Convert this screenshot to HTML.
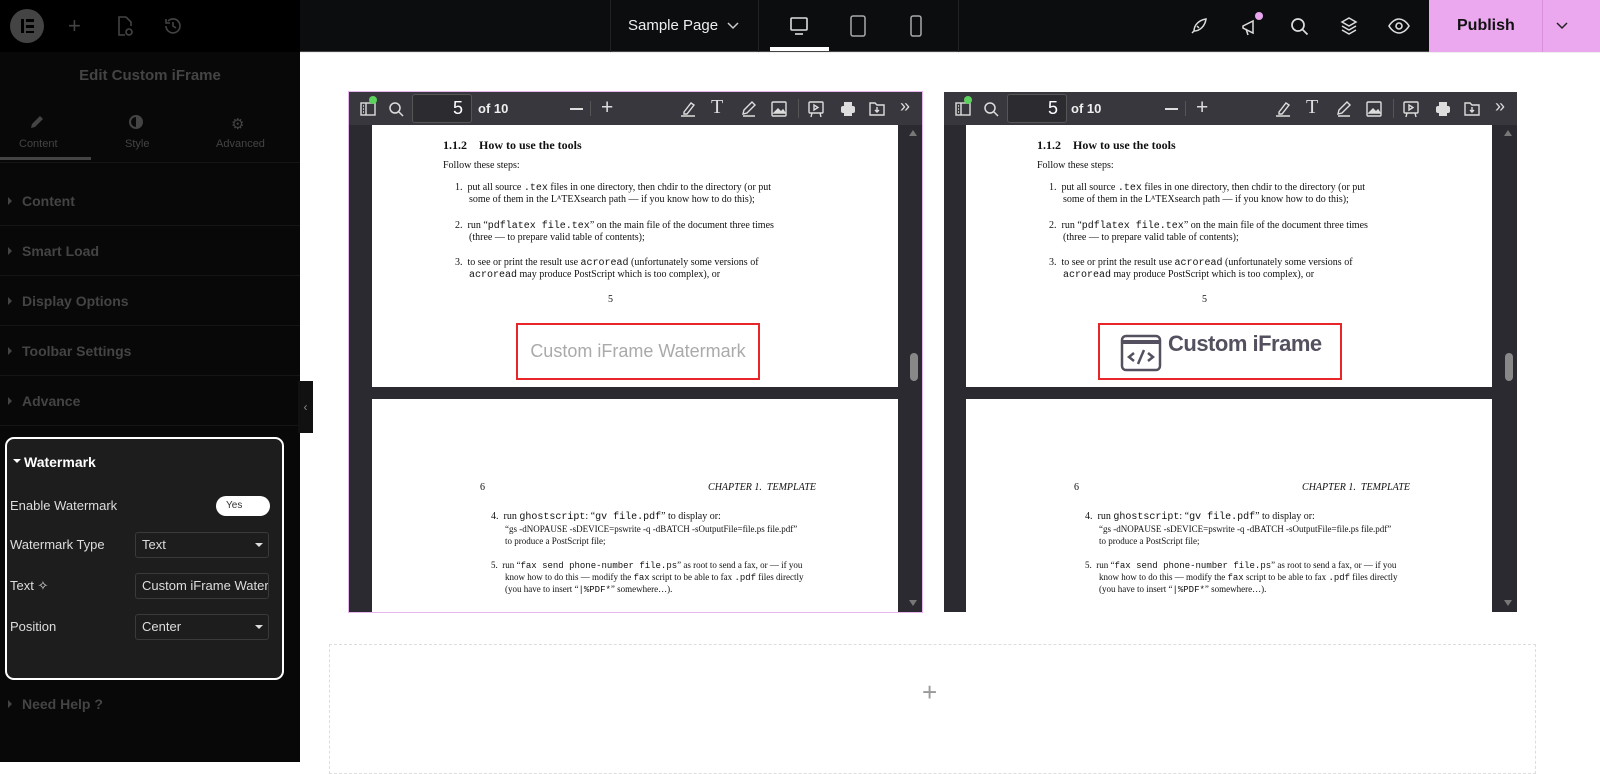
<!DOCTYPE html>
<html><head><meta charset="utf-8"><style>
*{margin:0;padding:0;box-sizing:border-box}
body{width:1600px;height:762px;overflow:hidden;background:#fff;font-family:"Liberation Sans",sans-serif;position:relative}
.a{position:absolute}
#top{left:0;top:0;width:1600px;height:52px;background:#0c0d0e;border-bottom:1px solid #444}
#side{left:0;top:52px;width:300px;height:710px;background:#080808}
.sec{position:absolute;left:0;width:300px;height:50px;border-bottom:1px solid #151515;color:#444;font-weight:bold;font-size:14px;padding:0 0 0 22px;line-height:50px}
.sec:before{content:"";position:absolute;left:8px;top:21px;border-left:4px solid #444;border-top:4px solid transparent;border-bottom:4px solid transparent}
.viewer{position:absolute;top:92px;width:573px;height:520px;background:#2b2a30;overflow:hidden}
.tb{position:absolute;left:0;top:0;width:100%;height:33px;background:#38373d;color:#ddd}
.pg{position:absolute;background:#fff;font-family:"Liberation Serif",serif;font-size:10px;color:#111;line-height:12px}
.pg .t{position:absolute;white-space:nowrap}
.mono{font-family:"Liberation Mono",monospace}
.ico{position:absolute;top:8px}
.fld{position:absolute;left:135px;width:134px;height:26px;border:1px solid #3a3a3a;border-radius:3px;color:#ddd;font-size:13px;line-height:24px;padding-left:6px}
.lbl{position:absolute;left:10px;color:#ddd;font-size:13px}
</style></head><body>

<div id="top" class="a">
 <div class="a" style="left:0;top:0;width:300px;height:52px;background:#000"></div>
 <div class="a" style="left:10px;top:9px;width:34px;height:34px;border-radius:50%;background:#444"></div>
 <div class="a" style="left:21px;top:19px;width:3px;height:14px;background:#000"></div>
 <div class="a" style="left:26px;top:19px;width:8px;height:3px;background:#000"></div>
 <div class="a" style="left:26px;top:25px;width:8px;height:3px;background:#000"></div>
 <div class="a" style="left:26px;top:31px;width:8px;height:2px;background:#000"></div>
 <div class="a" style="left:68px;top:13px;color:#444;font-size:22px">+</div>
 <svg class="a" style="left:115px;top:15px" width="20" height="22" fill="none" stroke="#444" stroke-width="1.6"><path d="M11 2H4v18h6M11 2l5 5v4"/><circle cx="14" cy="17" r="3"/></svg>
 <svg class="a" style="left:163px;top:16px" width="20" height="20" fill="none" stroke="#444" stroke-width="1.6"><path d="M3 10a7 7 0 1 0 2-5M3 3v4h4M10 6v4l3 2"/></svg>
 <div class="a" style="left:610px;top:0;width:1px;height:52px;background:#222"></div>
 <div class="a" style="left:628px;top:17px;color:#eee;font-size:15px">Sample Page</div>
 <svg class="a" style="left:727px;top:22px" width="12" height="8" fill="none" stroke="#ccc" stroke-width="1.5"><path d="M1 1l5 5 5-5"/></svg>
 <div class="a" style="left:758px;top:0;width:1px;height:52px;background:#222"></div>
 <svg class="a" style="left:789px;top:16px" width="20" height="20" fill="none" stroke="#ddd" stroke-width="1.6"><rect x="2" y="2" width="16" height="12" rx="1"/><path d="M6 18h8"/></svg>
 <div class="a" style="left:770px;top:47px;width:59px;height:4px;background:#fff"></div>
 <svg class="a" style="left:849px;top:14px" width="18" height="24" fill="none" stroke="#aaa" stroke-width="1.5"><rect x="2" y="2" width="14" height="20" rx="2"/></svg>
 <svg class="a" style="left:909px;top:14px" width="14" height="24" fill="none" stroke="#aaa" stroke-width="1.5"><rect x="2" y="2" width="10" height="20" rx="2"/></svg>
 <div class="a" style="left:958px;top:0;width:1px;height:52px;background:#222"></div>
 <svg class="a" style="left:1190px;top:17px" width="18" height="18" fill="none" stroke="#ddd" stroke-width="1.5"><path d="M4 14c0-6 5-11 12-12-1 7-6 12-12 12zM4 14l-2 2M7 9l2 2"/></svg>
 <svg class="a" style="left:1240px;top:17px" width="20" height="20" fill="none" stroke="#ddd" stroke-width="1.5"><path d="M3 9l10-5v12L3 11zM6 12l2 6"/></svg>
 <div class="a" style="left:1255px;top:12px;width:8px;height:8px;border-radius:50%;background:#e9a6f0"></div>
 <svg class="a" style="left:1290px;top:17px" width="19" height="19" fill="none" stroke="#ddd" stroke-width="1.7"><circle cx="8" cy="8" r="6"/><path d="M12.5 12.5l5 5"/></svg>
 <svg class="a" style="left:1339px;top:16px" width="20" height="20" fill="none" stroke="#ddd" stroke-width="1.5"><path d="M10 2l7 4-7 4-7-4zM3 10l7 4 7-4M3 14l7 4 7-4"/></svg>
 <svg class="a" style="left:1388px;top:17px" width="22" height="18" fill="none" stroke="#ddd" stroke-width="1.6"><path d="M1 9c3-5 7-7 10-7s7 2 10 7c-3 5-7 7-10 7S4 14 1 9z"/><circle cx="11" cy="9" r="3"/></svg>
 <div class="a" style="left:1429px;top:0;width:171px;height:52px;background:#eba8ef"></div>
 <div class="a" style="left:1457px;top:17px;color:#111;font-size:16px;font-weight:bold">Publish</div>
 <div class="a" style="left:1542px;top:0;width:1px;height:52px;background:#d88fdc"></div>
 <svg class="a" style="left:1556px;top:22px" width="12" height="8" fill="none" stroke="#222" stroke-width="1.5"><path d="M1 1l5 5 5-5"/></svg>
</div>

<div id="side" class="a">
 <div class="a" style="left:0;top:0;width:300px;text-align:center;top:15px;color:#444;font-weight:bold;font-size:15px">Edit Custom iFrame</div>
 <svg class="a" style="left:29px;top:62px" width="16" height="16" fill="#444"><path d="M2 14l1-4 8-8 3 3-8 8z"/></svg>
 <div class="a" style="left:19px;top:86px;color:#444;font-size:11px">Content</div>
 <div class="a" style="left:0;top:105px;width:91px;height:3px;background:#444"></div>
 <div class="a" style="left:129px;top:63px;width:14px;height:14px;border-radius:50%;border:2px solid #444;background:linear-gradient(90deg,transparent 50%,#444 50%)"></div>
 <div class="a" style="left:125px;top:86px;color:#444;font-size:11px">Style</div>
 <div class="a" style="left:231px;top:63px;color:#444;font-size:15px">⚙</div>
 <div class="a" style="left:216px;top:86px;color:#444;font-size:11px">Advanced</div>
 <div class="a" style="left:0;top:110px;width:300px;height:1px;background:#151515"></div>
 <div class="sec" style="top:124px">Content</div>
 <div class="sec" style="top:174px">Smart Load</div>
 <div class="sec" style="top:224px">Display Options</div>
 <div class="sec" style="top:274px">Toolbar Settings</div>
 <div class="sec" style="top:324px">Advance</div>
 <div class="a" style="left:5px;top:385px;width:279px;height:243px;border:2px solid #fff;border-radius:9px;background:#1d1d1d">
  <div class="a" style="left:6px;top:20px;border-top:4px solid #fff;border-left:4px solid transparent;border-right:4px solid transparent"></div>
  <div class="a" style="left:17px;top:15px;color:#fff;font-weight:bold;font-size:14px">Watermark</div>
 </div>
 <div class="lbl" style="top:446px">Enable Watermark</div>
 <div class="a" style="left:216px;top:444px;width:54px;height:20px;border-radius:10px;background:#fff;color:#333;font-size:10px;line-height:20px;padding-left:10px">Yes</div>
 <div class="lbl" style="top:485px">Watermark Type</div>
 <div class="fld" style="top:480px">Text</div>
 <div class="lbl" style="top:526px">Text ✧</div>
 <div class="fld" style="top:521px;overflow:hidden;white-space:nowrap">Custom iFrame Waterm</div>
 <div class="lbl" style="top:567px">Position</div>
 <div class="fld" style="top:562px">Center</div>
 <div class="a" style="left:255px;top:491px;border-top:4px solid #ddd;border-left:4px solid transparent;border-right:4px solid transparent"></div>
 <div class="a" style="left:255px;top:573px;border-top:4px solid #ddd;border-left:4px solid transparent;border-right:4px solid transparent"></div>
 <div class="sec" style="top:627px;border:none">Need Help ?</div>
</div>
<div class="a" style="left:298px;top:381px;width:15px;height:52px;background:#111;color:#888;font-size:12px;line-height:52px;text-align:center">‹</div>
<div class="a" style="left:300px;top:52px;width:1300px;height:12px;border-top:1px solid #eee"></div>

<div class="viewer" style="left:349px;outline:1px solid #e9b5ef">
 <div class="tb">
  <svg class="ico" style="left:10px" width="18" height="18" fill="none" stroke="#ddd" stroke-width="1.4"><rect x="2" y="3" width="14" height="12"/><path d="M7 3v12M4 6h1M4 9h1M4 12h1"/></svg>
  <div class="a" style="left:20px;top:4px;width:8px;height:8px;border-radius:50%;background:#5dd35d"></div>
  <svg class="ico" style="left:38px" width="18" height="18" fill="none" stroke="#ddd" stroke-width="1.5"><circle cx="8" cy="8" r="5"/><path d="M12 12l4 4"/></svg>
  <div class="a" style="left:63px;top:2px;width:60px;height:29px;border:1px solid #555;border-radius:3px;background:#2c2b30;color:#fff;font-size:18px;text-align:right;padding-right:8px;line-height:27px">5</div>
  <div class="a" style="left:129px;top:9px;font-size:13px;color:#eee;font-weight:bold">of 10</div>
  <div class="a" style="left:221px;top:16px;width:13px;height:1.5px;background:#ddd"></div>
  <div class="a" style="left:241px;top:9px;width:1px;height:15px;background:#555"></div>
  <div class="a" style="left:252px;top:4px;font-size:21px;color:#ddd;line-height:24px">+</div>
  <svg class="ico" style="left:330px" width="18" height="18" fill="none" stroke="#ddd" stroke-width="1.4"><path d="M5 12l7-9 3 2-7 9H5zM2 16h14"/></svg>
  <div class="a" style="left:362px;top:4px;font-size:20px;color:#ddd;font-family:'Liberation Serif',serif">T</div>
  <svg class="ico" style="left:391px" width="18" height="18" fill="none" stroke="#ddd" stroke-width="1.4"><path d="M3 14l1-4 8-8 3 3-8 8zM3 16h12"/></svg>
  <svg class="ico" style="left:421px" width="18" height="18" fill="none" stroke="#ddd" stroke-width="1.4"><rect x="2" y="2" width="14" height="14" rx="1"/><path d="M4 13l4-4 3 3 2-2 2 3z" fill="#ddd"/></svg>
  <div class="a" style="left:449px;top:7px;width:1px;height:19px;background:#555"></div>
  <svg class="ico" style="left:458px" width="18" height="18" fill="none" stroke="#ddd" stroke-width="1.4"><rect x="2" y="2" width="14" height="11" rx="1"/><path d="M7 5v5l4-2.5zM5 13l-1 4M13 13l1 4" /></svg>
  <svg class="ico" style="left:490px" width="18" height="18" fill="#ddd"><rect x="5" y="2" width="8" height="4"/><rect x="2" y="6" width="14" height="7" rx="2"/><rect x="5" y="11" width="8" height="5"/></svg>
  <svg class="ico" style="left:519px" width="18" height="18" fill="none" stroke="#ddd" stroke-width="1.4"><path d="M2 3h5l2 2h7v10H2zM9 7v5M7 10l2 2 2-2"/></svg>
  <div class="a" style="left:551px;top:4px;font-size:18px;color:#ddd">»</div>
 </div>
 <div class="pg" style="left:23px;top:33px;width:526px;height:262px">
  <div class="t" style="left:71px;top:14px;font-weight:bold;font-size:12px">1.1.2&nbsp;&nbsp;&nbsp; How to use the tools</div>
  <div class="t" style="left:71px;top:35px">Follow these steps:</div>
  <div class="t" style="left:83px;top:57px">1.&nbsp; put all source <span class="mono">.tex</span> files in one directory, then chdir to the directory (or put</div>
  <div class="t" style="left:97px;top:69px">some of them in the LᴬTEXsearch path — if you know how to do this);</div>
  <div class="t" style="left:83px;top:95px">2.&nbsp; run “<span class="mono">pdflatex file.tex</span>” on the main file of the document three times</div>
  <div class="t" style="left:97px;top:107px">(three — to prepare valid table of contents);</div>
  <div class="t" style="left:83px;top:132px">3.&nbsp; to see or print the result use <span class="mono">acroread</span> (unfortunately some versions of</div>
  <div class="t" style="left:97px;top:144px"><span class="mono">acroread</span> may produce PostScript which is too complex), or</div>
  <div class="t" style="left:236px;top:169px">5</div>
  <div class="a" style="left:144px;top:198px;width:244px;height:57px;border:2px solid #e8262a;color:#aaa;font-family:'Liberation Sans',sans-serif;font-size:18px;line-height:53px;text-align:center">Custom iFrame Watermark</div>
 </div>
 <div class="pg" style="left:23px;top:307px;width:526px;height:220px">
  <div class="t" style="left:108px;top:83px">6</div>
  <div class="t" style="right:82px;top:83px;font-style:italic">CHAPTER 1.&nbsp; TEMPLATE</div>
  <div class="t" style="left:119px;top:112px">4.&nbsp; run <span class="mono">ghostscript</span>: “<span class="mono">gv file.pdf</span>” to display or:</div>
  <div class="t" style="left:133px;top:124px;font-size:9px">“gs -dNOPAUSE -sDEVICE=pswrite -q -dBATCH -sOutputFile=file.ps file.pdf”</div>
  <div class="t" style="left:133px;top:136px;font-size:9px">to produce a PostScript file;</div>
  <div class="t" style="left:119px;top:160px;font-size:9px">5.&nbsp; run “<span class="mono">fax send phone-number file.ps</span>” as root to send a fax, or — if you</div>
  <div class="t" style="left:133px;top:172px;font-size:9px">know how to do this — modify the <span class="mono">fax</span> script to be able to fax <span class="mono">.pdf</span> files directly</div>
  <div class="t" style="left:133px;top:184px;font-size:9px">(you have to insert “<span class="mono">|%PDF*</span>” somewhere…).</div>
 </div>
 <div class="a" style="left:560px;top:38px;border-bottom:6px solid #777;border-left:4px solid transparent;border-right:4px solid transparent"></div>
 <div class="a" style="left:561px;top:261px;width:8px;height:28px;border-radius:4px;background:#888"></div>
 <div class="a" style="left:560px;top:508px;border-top:6px solid #777;border-left:4px solid transparent;border-right:4px solid transparent"></div>
</div>

<div class="viewer" style="left:944px">
 <div class="tb">
  <svg class="ico" style="left:10px" width="18" height="18" fill="none" stroke="#ddd" stroke-width="1.4"><rect x="2" y="3" width="14" height="12"/><path d="M7 3v12M4 6h1M4 9h1M4 12h1"/></svg>
  <div class="a" style="left:20px;top:4px;width:8px;height:8px;border-radius:50%;background:#5dd35d"></div>
  <svg class="ico" style="left:38px" width="18" height="18" fill="none" stroke="#ddd" stroke-width="1.5"><circle cx="8" cy="8" r="5"/><path d="M12 12l4 4"/></svg>
  <div class="a" style="left:63px;top:2px;width:60px;height:29px;border:1px solid #555;border-radius:3px;background:#2c2b30;color:#fff;font-size:18px;text-align:right;padding-right:8px;line-height:27px">5</div>
  <div class="a" style="left:127px;top:9px;font-size:13px;color:#eee;font-weight:bold">of 10</div>
  <div class="a" style="left:221px;top:16px;width:13px;height:1.5px;background:#ddd"></div>
  <div class="a" style="left:241px;top:9px;width:1px;height:15px;background:#555"></div>
  <div class="a" style="left:252px;top:4px;font-size:21px;color:#ddd;line-height:24px">+</div>
  <svg class="ico" style="left:330px" width="18" height="18" fill="none" stroke="#ddd" stroke-width="1.4"><path d="M5 12l7-9 3 2-7 9H5zM2 16h14"/></svg>
  <div class="a" style="left:362px;top:4px;font-size:20px;color:#ddd;font-family:'Liberation Serif',serif">T</div>
  <svg class="ico" style="left:391px" width="18" height="18" fill="none" stroke="#ddd" stroke-width="1.4"><path d="M3 14l1-4 8-8 3 3-8 8zM3 16h12"/></svg>
  <svg class="ico" style="left:421px" width="18" height="18" fill="none" stroke="#ddd" stroke-width="1.4"><rect x="2" y="2" width="14" height="14" rx="1"/><path d="M4 13l4-4 3 3 2-2 2 3z" fill="#ddd"/></svg>
  <div class="a" style="left:449px;top:7px;width:1px;height:19px;background:#555"></div>
  <svg class="ico" style="left:458px" width="18" height="18" fill="none" stroke="#ddd" stroke-width="1.4"><rect x="2" y="2" width="14" height="11" rx="1"/><path d="M7 5v5l4-2.5zM5 13l-1 4M13 13l1 4" /></svg>
  <svg class="ico" style="left:490px" width="18" height="18" fill="#ddd"><rect x="5" y="2" width="8" height="4"/><rect x="2" y="6" width="14" height="7" rx="2"/><rect x="5" y="11" width="8" height="5"/></svg>
  <svg class="ico" style="left:519px" width="18" height="18" fill="none" stroke="#ddd" stroke-width="1.4"><path d="M2 3h5l2 2h7v10H2zM9 7v5M7 10l2 2 2-2"/></svg>
  <div class="a" style="left:551px;top:4px;font-size:18px;color:#ddd">»</div>
 </div>
 <div class="pg" style="left:22px;top:33px;width:526px;height:262px">
  <div class="t" style="left:71px;top:14px;font-weight:bold;font-size:12px">1.1.2&nbsp;&nbsp;&nbsp; How to use the tools</div>
  <div class="t" style="left:71px;top:35px">Follow these steps:</div>
  <div class="t" style="left:83px;top:57px">1.&nbsp; put all source <span class="mono">.tex</span> files in one directory, then chdir to the directory (or put</div>
  <div class="t" style="left:97px;top:69px">some of them in the LᴬTEXsearch path — if you know how to do this);</div>
  <div class="t" style="left:83px;top:95px">2.&nbsp; run “<span class="mono">pdflatex file.tex</span>” on the main file of the document three times</div>
  <div class="t" style="left:97px;top:107px">(three — to prepare valid table of contents);</div>
  <div class="t" style="left:83px;top:132px">3.&nbsp; to see or print the result use <span class="mono">acroread</span> (unfortunately some versions of</div>
  <div class="t" style="left:97px;top:144px"><span class="mono">acroread</span> may produce PostScript which is too complex), or</div>
  <div class="t" style="left:236px;top:169px">5</div>
  <div class="a" style="left:132px;top:198px;width:244px;height:57px;border:2px solid #e8262a">
   <svg class="a" style="left:20px;top:9px" width="42" height="38" fill="none" stroke="#55505f" stroke-width="2.5"><rect x="2" y="2" width="38" height="34" rx="4"/><path d="M2 8h38" stroke-width="4"/><path d="M14 19l-5 4 5 4M28 19l5 4-5 4M24 16l-6 14"/></svg>
   <div class="a" style="left:68px;top:13px;color:#55505f;font-family:'Liberation Sans',sans-serif;font-weight:bold;font-size:22px;letter-spacing:-0.5px;white-space:nowrap">Custom iFrame</div>
  </div>
 </div>
 <div class="pg" style="left:22px;top:307px;width:526px;height:220px">
  <div class="t" style="left:108px;top:83px">6</div>
  <div class="t" style="right:82px;top:83px;font-style:italic">CHAPTER 1.&nbsp; TEMPLATE</div>
  <div class="t" style="left:119px;top:112px">4.&nbsp; run <span class="mono">ghostscript</span>: “<span class="mono">gv file.pdf</span>” to display or:</div>
  <div class="t" style="left:133px;top:124px;font-size:9px">“gs -dNOPAUSE -sDEVICE=pswrite -q -dBATCH -sOutputFile=file.ps file.pdf”</div>
  <div class="t" style="left:133px;top:136px;font-size:9px">to produce a PostScript file;</div>
  <div class="t" style="left:119px;top:160px;font-size:9px">5.&nbsp; run “<span class="mono">fax send phone-number file.ps</span>” as root to send a fax, or — if you</div>
  <div class="t" style="left:133px;top:172px;font-size:9px">know how to do this — modify the <span class="mono">fax</span> script to be able to fax <span class="mono">.pdf</span> files directly</div>
  <div class="t" style="left:133px;top:184px;font-size:9px">(you have to insert “<span class="mono">|%PDF*</span>” somewhere…).</div>
 </div>
 <div class="a" style="left:560px;top:38px;border-bottom:6px solid #777;border-left:4px solid transparent;border-right:4px solid transparent"></div>
 <div class="a" style="left:561px;top:261px;width:8px;height:28px;border-radius:4px;background:#888"></div>
 <div class="a" style="left:560px;top:508px;border-top:6px solid #777;border-left:4px solid transparent;border-right:4px solid transparent"></div>
</div>

<div class="a" style="left:329px;top:644px;width:1207px;height:130px;border:1px dashed #ddd"></div>
<div class="a" style="left:922px;top:677px;color:#999;font-size:26px;font-weight:300">+</div>
</body></html>
